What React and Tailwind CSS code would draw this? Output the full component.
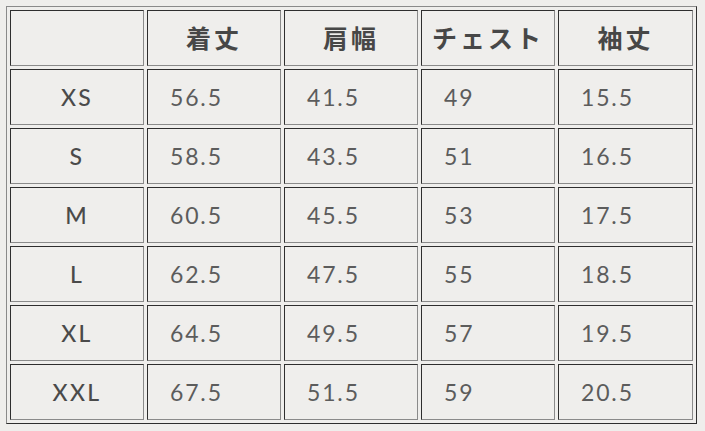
import React from 'react';

const rows = [
  ['XS', '56.5', '41.5', '49', '15.5'],
  ['S', '58.5', '43.5', '51', '16.5'],
  ['M', '60.5', '45.5', '53', '17.5'],
  ['L', '62.5', '47.5', '55', '18.5'],
  ['XL', '64.5', '49.5', '57', '19.5'],
  ['XXL', '67.5', '51.5', '59', '20.5'],
];

const heads = ['', '着丈', '肩幅', 'チェスト', '袖丈'];

const cell = 'h-[56px] border border-t-[#2e2e2e] border-l-[#2e2e2e] border-b-[#8a8a8a] border-r-[#8a8a8a] p-0 align-middle';

export default function App() {
  return (
    <div className="w-[705px] h-[431px] bg-[#efeeec] p-[6px]" style={{ fontFamily: 'Lato, "Noto Sans CJK JP", sans-serif' }}>
      <table className="table-fixed w-[691px] border-separate border-spacing-[3px] border border-t-[#8a8a8a] border-l-[#8a8a8a] border-b-[#2e2e2e] border-r-[#2e2e2e]">
        <colgroup>
          <col className="w-[134px]" />
          <col className="w-[134px]" />
          <col className="w-[134px]" />
          <col className="w-[134px]" />
          <col className="w-[135px]" />
        </colgroup>
        <thead>
          <tr>
            {heads.map((h, i) => (
              <th
                key={i}
                className={`${cell} text-center text-[25px] font-bold text-[#474747] tracking-[0.12em]`}
                style={{ fontFamily: '"Noto Sans CJK JP", sans-serif' }}
              >
                {h}
              </th>
            ))}
          </tr>
        </thead>
        <tbody>
          {rows.map((r) => (
            <tr key={r[0]}>
              <td className={`${cell} text-center text-[23px] font-medium text-[#4a4a4a] tracking-[0.1em]`}>{r[0]}</td>
              {r.slice(1).map((v, i) => (
                <td key={i} className={`${cell} pl-[22px] text-left text-[23px] text-[#5c5c5c] tracking-[0.08em]`}>
                  {v}
                </td>
              ))}
            </tr>
          ))}
        </tbody>
      </table>
    </div>
  );
}
